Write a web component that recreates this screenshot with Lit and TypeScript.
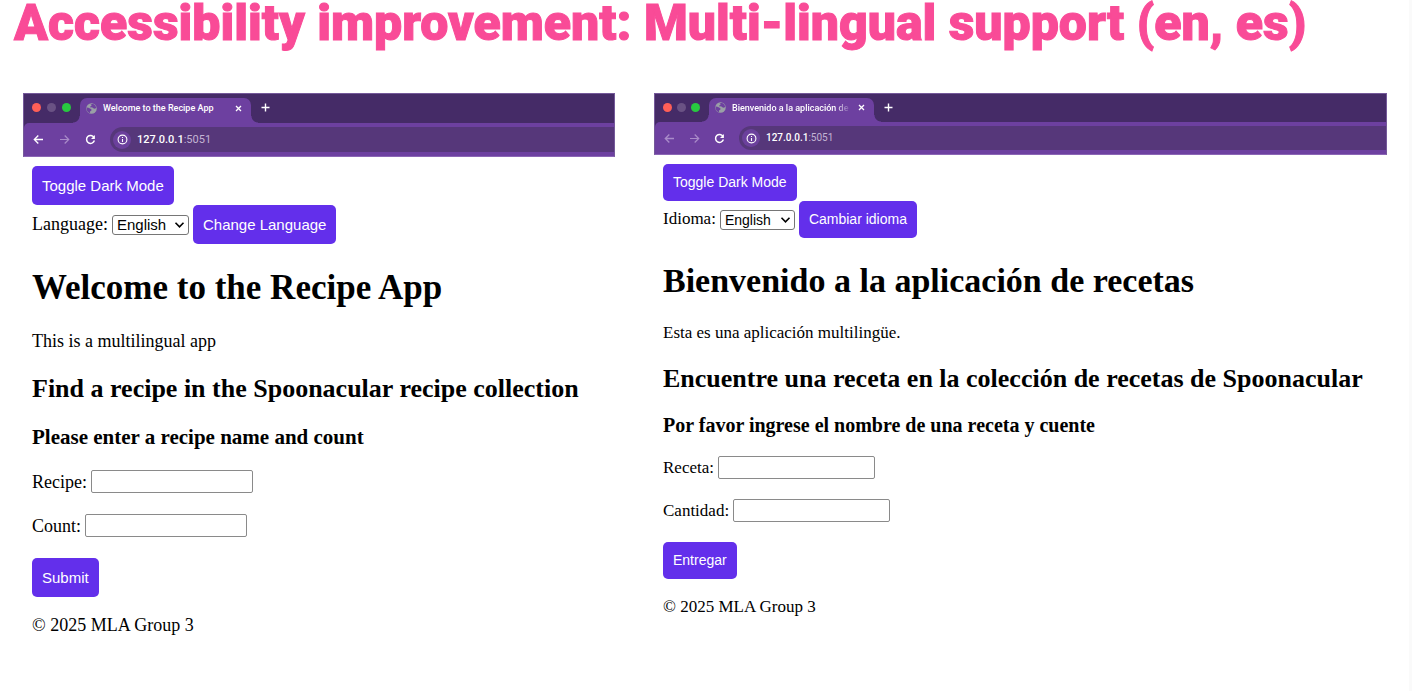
import { LitElement, html, css, svg } from "lit";
import { customElement, property } from "lit/decorators.js";

const globe = svg`<circle cx="8" cy="8" r="7.6" fill="#9aa0a6"/>
  <path d="M1 6.4 3.6 7l3 1.2 1.6 1.6-.6 1.5-1.5.6-.3 3A7.2 7.2 0 0 1 1 8zM6.4 1.4l1.8 1.2-.6 1.6L6 5l.6 1.4 2.2-.2 1.8 1.6 2 .6 2.4-1.2A7.2 7.2 0 0 0 10.6 1.6z" fill="#6d40a0"/>`;

@customElement("browser-bar")
export class BrowserBar extends LitElement {
  @property() heading = "";
  @property({ type: Boolean }) canGoBack = false;

  static styles = css`
    :host {
      display: block;
      box-sizing: border-box;
      font-family: Roboto, "Liberation Sans", sans-serif;
      color: #fff;
      background: #452b67;
      border: 1px solid #75599a;
      border-bottom-color: #8b66b5;
    }
    button {
      padding: 0;
      border: 0;
      background: none;
      color: inherit;
      display: flex;
    }
    svg { display: block; }
    .strip {
      display: flex;
      align-items: flex-end;
      height: var(--strip);
      padding-left: 8px;
    }
    .lights {
      display: flex;
      align-items: center;
      gap: var(--light-gap);
      height: 21px;
      align-self: flex-start;
      margin: 3px 9px 0 0;
    }
    .light { width: 9px; height: 9px; border-radius: 50%; }
    .red { background: #ff5f57; }
    .dim { background: #6a5284; }
    .green { background: #28c840; }
    .tab {
      position: relative;
      box-sizing: border-box;
      display: flex;
      align-items: center;
      width: var(--tab-width);
      height: calc(var(--strip) - 4px);
      padding: 0 8px 5px 6px;
      background: #6d40a0;
      border-radius: 7px 7px 0 0;
    }
    .tab::before, .tab::after {
      content: "";
      position: absolute;
      bottom: 0;
      width: 7px;
      height: 7px;
    }
    .tab::before { right: 100%; background: radial-gradient(circle at 0 0, transparent 6px, #6d40a0 7px); }
    .tab::after { left: 100%; background: radial-gradient(circle at 100% 0, transparent 6px, #6d40a0 7px); }
    .title {
      flex: 1;
      min-width: 0;
      margin: 0 6px;
      overflow: hidden;
      white-space: nowrap;
      font-size: 9px;
      line-height: 14px;
      font-weight: 500;
    }
    .faded {
      -webkit-mask-image: linear-gradient(90deg, #000 86%, transparent);
      mask-image: linear-gradient(90deg, #000 86%, transparent);
    }
    .new { height: 21px; align-items: center; align-self: flex-start; margin: 3px 0 0 9px; }
    .toolbar {
      display: flex;
      align-items: center;
      background: #6d40a0;
      border-top-left-radius: 5px;
      padding: 4px 0 4px 8px;
    }
    .nav { display: flex; gap: var(--nav-gap); margin-right: 13px; }
    .off { color: #a98bc9; }
    .address {
      flex: 1;
      display: flex;
      align-items: center;
      gap: 6px;
      height: var(--address);
      padding-left: 3px;
      background: #56377a;
      border-radius: 13px 0 0 13px;
      font-size: var(--address-text);
      line-height: 14px;
      color: #c3b4d4;
    }
    .info {
      width: 18px;
      height: 18px;
      border-radius: 50%;
      background: #6b409c;
      align-items: center;
      justify-content: center;
      color: #fff;
    }
    .host { color: #fff; font-weight: 500; }
  `;

  render() {
    return html`
      <div class="strip">
        <div class="lights">
          <span class="light red"></span><span class="light dim"></span><span class="light green"></span>
        </div>
        <div class="tab">
          <svg width="11" height="11" viewBox="0 0 16 16">${globe}</svg>
          <span class="title ${this.canGoBack ? "" : "faded"}">${this.heading}</span>
          <button aria-label="Close tab">
            <svg width="9" height="9" viewBox="0 0 9 9" fill="none" stroke="currentColor" stroke-width="1.3"><path d="M2 2l5 5M7 2L2 7"/></svg>
          </button>
        </div>
        <button class="new" aria-label="New tab">
          <svg width="11" height="11" viewBox="0 0 11 11" fill="none" stroke="currentColor" stroke-width="1.4"><path d="M5.5 1.5v8M1.5 5.5h8"/></svg>
        </button>
      </div>
      <div class="toolbar">
        <div class="nav">
          <button class=${this.canGoBack ? "" : "off"} aria-label="Back">
            <svg width="13" height="13" viewBox="0 0 13 13" fill="none" stroke="currentColor" stroke-width="1.3"><path d="M11 6.5H2.4M6.3 2.5l-4 4 4 4"/></svg>
          </button>
          <button class="off" aria-label="Forward">
            <svg width="13" height="13" viewBox="0 0 13 13" fill="none" stroke="currentColor" stroke-width="1.2"><path d="M2 6.5h8.6M6.7 2.5l4 4-4 4"/></svg>
          </button>
          <button aria-label="Reload">
            <svg width="13" height="13" viewBox="0 0 13 13" fill="none" stroke="currentColor" stroke-width="1.5"><path d="M10 4.3A4 4 0 1 0 10.4 7.6"/><path d="M10.9 2v3.9H7z" fill="currentColor" stroke="none"/></svg>
          </button>
        </div>
        <div class="address">
          <button class="info" aria-label="Site information">
            <svg width="11" height="11" viewBox="0 0 11 11" fill="none" stroke="currentColor" stroke-width="1.1"><circle cx="5.5" cy="5.5" r="4.4"/><path d="M5.5 5v3M5.5 2.9V4"/></svg>
          </button>
          <span><span class="host">127.0.0.1</span>:5051</span>
        </div>
      </div>
    `;
  }
}

interface Copy {
  title: string;
  language: string;
  change: string;
  intro: string;
  find: string;
  prompt: string;
  recipe: string;
  count: string;
  submit: string;
}

@customElement("recipe-page")
export class RecipePage extends LitElement {
  @property({ attribute: false }) copy!: Copy;
  @property({ type: Boolean }) canGoBack = false;

  static styles = css`
    :host {
      display: block;
      font-family: "Liberation Serif", "Times New Roman", serif;
      font-size: var(--text);
      line-height: 20px;
      color: #000;
    }
    .content { padding: 9px 9px 0; }
    h1, h2, h3, p, form, footer { margin: 0; }
    .action {
      display: block;
      box-sizing: border-box;
      height: var(--button);
      padding: 0 10px 1px;
      border: 0;
      border-radius: 5px;
      background: #632feb;
      color: #fff;
      font: var(--button-text) "Liberation Sans", Arial, sans-serif;
      white-space: nowrap;
    }
    .row { display: flex; align-items: center; gap: 4px; }
    .controls label { padding-bottom: 1px; }
    .picker { display: grid; align-items: center; }
    select {
      grid-area: 1 / 1;
      appearance: none;
      box-sizing: border-box;
      width: var(--select);
      height: 20px;
      margin: 0;
      padding: 0 0 0 4px;
      border: 1px solid #767676;
      border-radius: 3px;
      background: #fff;
      color: #000;
      font: var(--button-text) "Liberation Sans", Arial, sans-serif;
    }
    .chevron { grid-area: 1 / 1; justify-self: end; margin-right: 4px; pointer-events: none; }
    h1 { margin-top: 23px; font-size: var(--h1); line-height: var(--h1-line); }
    p { margin-top: 23px; }
    h2 { margin-top: calc(var(--gap) + 2px); font-size: var(--h2); line-height: 30px; }
    h3 { margin-top: var(--gap); font-size: var(--h3); line-height: 24px; }
    form { display: flex; flex-direction: column; align-items: flex-start; gap: var(--form-gap); margin-top: var(--gap); }
    input {
      box-sizing: border-box;
      width: var(--field);
      height: 23px;
      margin: 0;
      padding: 1px 2px;
      border: 1px solid #8a8a8a;
      border-radius: 2px;
      background: #fff;
    }
    footer { margin-top: 18px; }
  `;

  render() {
    const c = this.copy;
    return html`
      <browser-bar .heading=${c.title} .canGoBack=${this.canGoBack}></browser-bar>
      <div class="content">
        <button class="action">Toggle Dark Mode</button>
        <div class="row controls">
          <label for="language">${c.language}</label>
          <div class="picker">
            <select id="language"><option>English</option><option>Español</option></select>
            <svg class="chevron" width="11" height="8" viewBox="0 0 11 8" fill="none" stroke="#000" stroke-width="1.6"><path d="M1.5 1.8l4 4 4-4"/></svg>
          </div>
          <button class="action">${c.change}</button>
        </div>
        <h1>${c.title}</h1>
        <p>${c.intro}</p>
        <h2>${c.find}</h2>
        <h3>${c.prompt}</h3>
        <form @submit=${(e: Event) => e.preventDefault()}>
          <div class="row"><label for="recipe">${c.recipe}</label><input id="recipe" type="text" /></div>
          <div class="row"><label for="count">${c.count}</label><input id="count" type="text" /></div>
          <button class="action">${c.submit}</button>
        </form>
        <footer>© 2025 MLA Group 3</footer>
      </div>
    `;
  }
}

const english: Copy = {
  title: "Welcome to the Recipe App",
  language: "Language:",
  change: "Change Language",
  intro: "This is a multilingual app",
  find: "Find a recipe in the Spoonacular recipe collection",
  prompt: "Please enter a recipe name and count",
  recipe: "Recipe:",
  count: "Count:",
  submit: "Submit",
};

const spanish: Copy = {
  title: "Bienvenido a la aplicación de recetas",
  language: "Idioma:",
  change: "Cambiar idioma",
  intro: "Esta es una aplicación multilingüe.",
  find: "Encuentre una receta en la colección de recetas de Spoonacular",
  prompt: "Por favor ingrese el nombre de una receta y cuente",
  recipe: "Receta:",
  count: "Cantidad:",
  submit: "Entregar",
};

@customElement("app-root")
export class AppRoot extends LitElement {
  static styles = css`
    :host {
      display: block;
      box-sizing: border-box;
      min-height: 100vh;
      background: #fff;
      border-right: 3px solid #fafafa;
    }
    .headline {
      margin: 0;
      padding: 0 14px;
      color: #f94b97;
      font: 900 50px/47px Roboto, "Liberation Sans", sans-serif;
      -webkit-text-stroke: 1px #f94b97;
    }
    .pages {
      display: grid;
      grid-template-columns: 592fr 733fr;
      gap: 39px;
      align-items: start;
      padding: 46px 22px 0 23px;
    }
    .large {
      --text: 18px;
      --h1: 35px;
      --h1-line: 41px;
      --h2: 26px;
      --h3: 21px;
      --gap: 21px;
      --form-gap: 21px;
      --button: 39px;
      --button-text: 15px;
      --select: 77px;
      --field: 162px;
      --strip: 29px;
      --tab-width: 171px;
      --light-gap: 6px;
      --nav-gap: 13px;
      --address: 25px;
      --address-text: 11px;
    }
    .small {
      --text: 17px;
      --h1: 34px;
      --h1-line: 39px;
      --h2: 26px;
      --h3: 20px;
      --gap: 19px;
      --form-gap: 20px;
      --button: 37px;
      --button-text: 14px;
      --select: 75px;
      --field: 157px;
      --strip: 28px;
      --tab-width: 165px;
      --light-gap: 5px;
      --nav-gap: 12px;
      --address: 24px;
      --address-text: 10px;
    }
  `;

  render() {
    return html`
      <h1 class="headline">Accessibility improvement: Multi-lingual support (en, es)</h1>
      <main class="pages">
        <recipe-page class="large" .copy=${english} .canGoBack=${true}></recipe-page>
        <recipe-page class="small" .copy=${spanish}></recipe-page>
      </main>
    `;
  }
}
